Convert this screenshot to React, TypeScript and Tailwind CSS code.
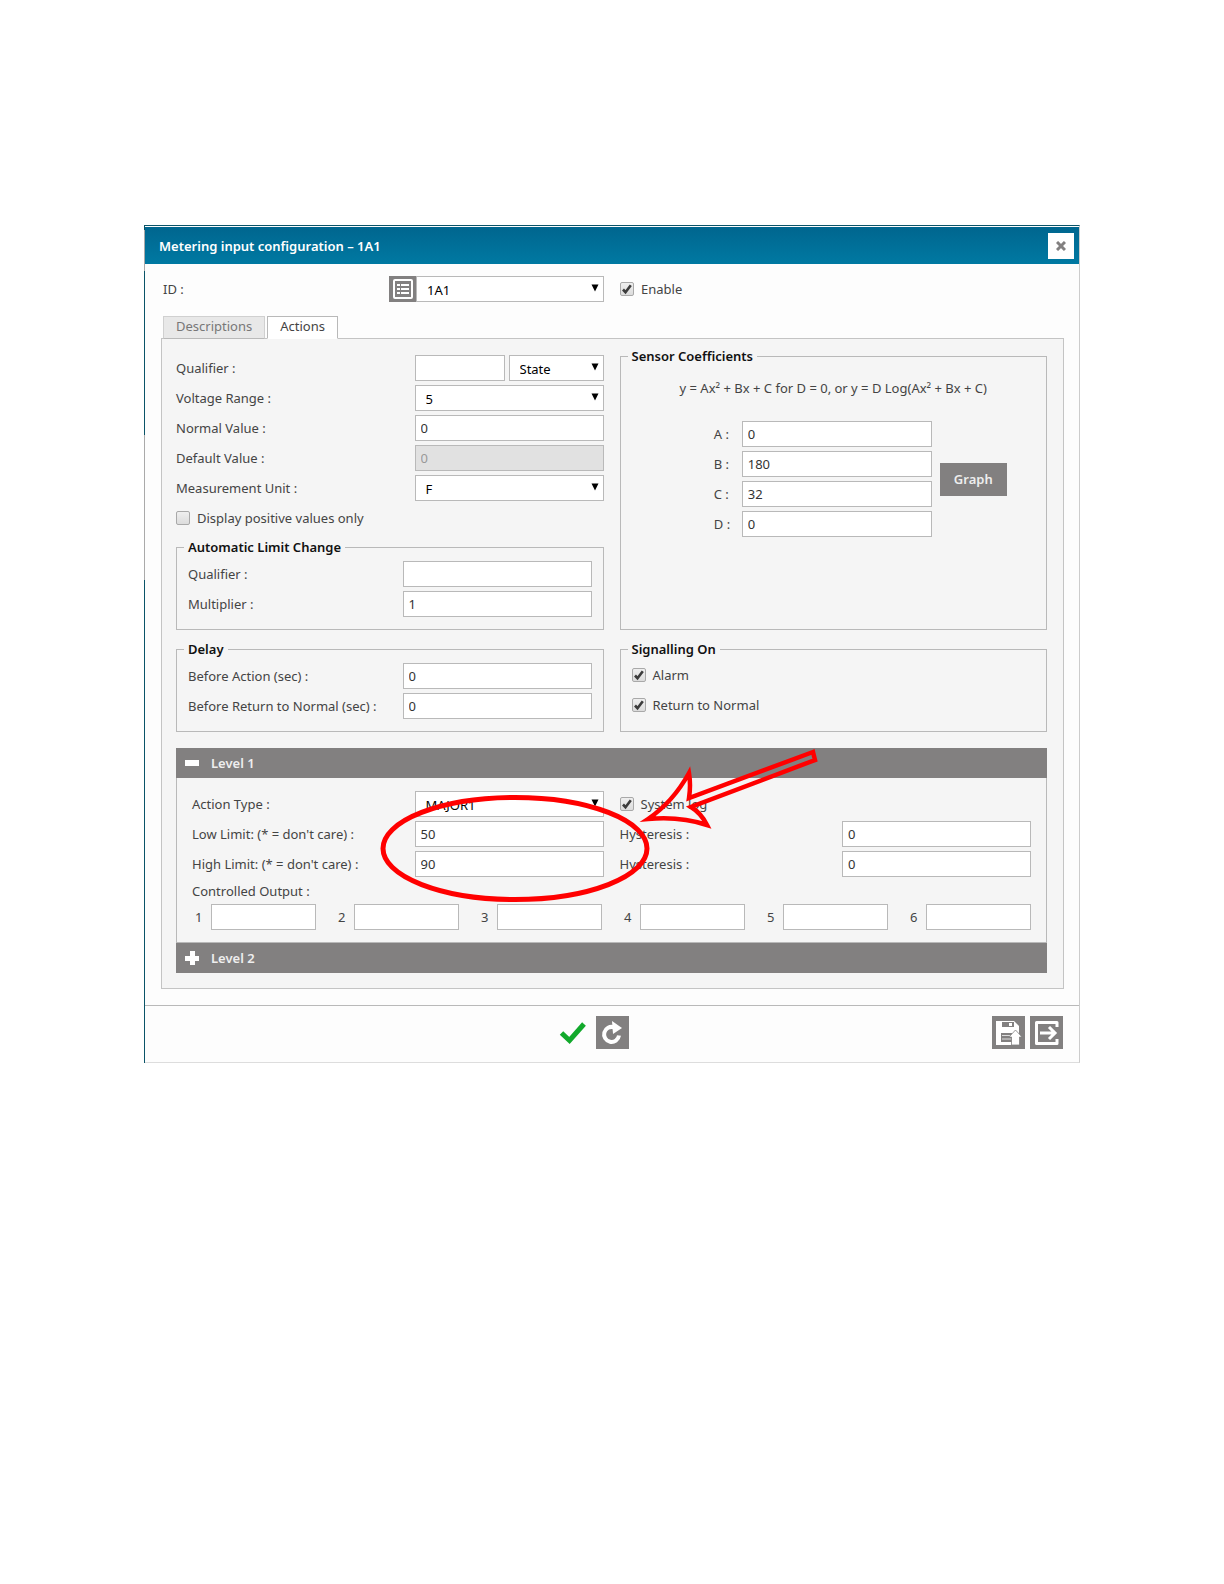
import { useId, useState, type ReactNode } from 'react';

const FIELD = 'h-[26px] border border-[#b9b9b9] bg-white px-[5px] text-[13px] text-[#333] outline-none focus:border-[#007099]';

function TextField({ label, value = '', width = 'w-[189px]', disabled = false }: { label: string; value?: string; width?: string; disabled?: boolean }) {
  const id = useId();
  return (
    <div className="flex items-center justify-between">
      <label htmlFor={id} className="pb-px">{label}</label>
      <input id={id} defaultValue={value} disabled={disabled} className={`${FIELD} ${width} disabled:bg-[#e1e1e1] disabled:text-[#999]`} />
    </div>
  );
}

function Select({ id, value, label, className = '' }: { id?: string; value: string; label?: string; className?: string }) {
  return (
    <div className={`relative ${className}`}>
      <select id={id} aria-label={label} defaultValue={value} className={`${FIELD} w-full appearance-none pt-px pl-[10px] text-black`}>
        <option>{value}</option>
      </select>
      <svg viewBox="0 0 8 8" className="pointer-events-none absolute top-[8px] right-[5px] size-[8px]"><path d="M0.5 0.5h7L4 7.5z" fill="#000" /></svg>
    </div>
  );
}

function SelectField({ label, value }: { label: string; value: string }) {
  const id = useId();
  return (
    <div className="flex items-center justify-between">
      <label htmlFor={id} className="pb-px">{label}</label>
      <Select id={id} value={value} className="w-[189px]" />
    </div>
  );
}

function Check({ label, checked = false }: { label: string; checked?: boolean }) {
  const [on, setOn] = useState(checked);
  return (
    <label className="flex h-[26px] items-center gap-[7px] pb-px">
      <span className="relative size-[14px]">
        <input type="checkbox" checked={on} onChange={(e) => setOn(e.target.checked)} className="block size-[14px] appearance-none rounded-[2px] border border-[#a9a9a9] bg-linear-to-b from-[#efefef] to-[#dcdcdc]" />
        {on && (
          <svg viewBox="0 0 14 14" className="pointer-events-none absolute inset-0 size-[14px]"><path d="M3 7.5L5.5 10.2L10.8 3.2" fill="none" stroke="#3c3c3c" strokeWidth="2.6" /></svg>
        )}
      </span>
      {label}
    </label>
  );
}

function Group({ title, children }: { title: string; children: ReactNode }) {
  return (
    <fieldset className="min-w-0 border border-[#b9b9b9] px-[11px] pb-[12px]">
      <legend className="-ml-1 px-1 text-[13px] leading-[18px] font-semibold text-[#111]">{title}</legend>
      {children}
    </fieldset>
  );
}

function LevelHeader({ title, open, onToggle }: { title: string; open: boolean; onToggle: () => void }) {
  return (
    <button onClick={onToggle} aria-expanded={open} className="flex h-[30px] w-full items-center gap-[12px] bg-[#828080] px-[9px] text-left font-semibold text-[#eee]">
      <svg viewBox="0 0 14 14" className="size-[14px]" fill="#fff">
        <path d={open ? 'M0 4h14v6H0z' : 'M5 0h5v5h4v5h-4v4H5v-4H0V5h5z'} />
      </svg>
      {title}
    </button>
  );
}

/** Hand-drawn markup that points at the two limit fields. */
function Annotation() {
  return (
    <svg viewBox="0 0 445 160" className="pointer-events-none absolute top-0 left-[202px] h-[160px] w-[445px]" fill="none" stroke="#f00" strokeWidth="5">
      <ellipse cx="137" cy="100.500" rx="132" ry="51" />
      <path d="M435 4L311 50Q313 37 311 25Q295 54 270 71Q302 68 329 77Q323 65 313 59L437 12Z" strokeWidth="4.500" strokeMiterlimit="8" />
    </svg>
  );
}

const COEFFS = [['A', '0'], ['B', '180'], ['C', '32'], ['D', '0']];
const ICON_BTN = 'flex size-[33px] items-center justify-center bg-[#828080] text-white';

export default function App() {
  const [tab, setTab] = useState('Actions');
  const [open1, setOpen1] = useState(true);
  const [open2, setOpen2] = useState(false);

  return (
    <main className="min-h-screen bg-white px-36 pt-[225px] pb-16 font-['Noto_Sans',sans-serif] text-[13px] leading-[18px] text-[#444]">
      <div className="bg-[linear-gradient(to_bottom,#0a5468_0_5px,#aaa_5px_46px,#0a5468_46px_210px,#aaa_210px_355px,#0a5468_355px)] pl-px">
        <section className="border-t border-r border-b border-t-[#0a5468] border-r-[#ccc] border-b-[#ddd] bg-[#fdfdfd] pt-px">
          <header className="flex h-[37px] items-center justify-between bg-linear-to-b from-[#00668f] to-[#0079a2] pr-[5px] pl-[14px]">
            <h1 className="text-[13px] font-semibold text-white">Metering input configuration – 1A1</h1>
            <button aria-label="Close" className="flex size-[26px] items-center justify-center bg-white">
              <svg viewBox="0 0 10 10" className="size-[10px]"><path d="M1 1L9 9M9 1L1 9" stroke="#828080" strokeWidth="3" /></svg>
            </button>
          </header>

          <div className="pt-[12px] pr-[15px] pl-4">
            <div className="grid grid-cols-2 gap-4 pr-[3px] pl-[2px]">
              <div className="flex items-center justify-between">
                <label htmlFor="input-id" className="pb-px">ID :</label>
                <div className="flex">
                  <button aria-label="List" className="flex h-[26px] w-[27px] items-center justify-center bg-[#828080]">
                    <svg viewBox="0 0 20 20" className="size-[20px]" fill="none" stroke="#fff" strokeWidth="2">
                      <rect x="1" y="1" width="18" height="18" rx="1" />
                      <path d="M4 6h3M8 6h8M4 10h3M8 10h8M4 14h3M8 14h8" />
                    </svg>
                  </button>
                  <Select id="input-id" value="1A1" className="w-[188px]" />
                </div>
              </div>
              <Check label="Enable" checked />
            </div>

            <div role="tablist" className="relative mt-[14px] -mb-px flex gap-[2px] pl-[2px]">
              {['Descriptions', 'Actions'].map((t) => (
                <button key={t} role="tab" aria-selected={tab === t} onClick={() => setTab(t)} className={`h-[23px] border px-[12px] pb-[3px] ${tab === t ? 'border-[#b9b9b9] border-b-white bg-white text-[#444]' : 'border-[#d0d0d0] border-b-[#b9b9b9] bg-[#e8e8e8] text-[#777]'}`}>
                  {t}
                </button>
              ))}
            </div>

            <div className="border border-[#c4c4c4] bg-[#f5f5f5] pt-2 pr-4 pb-[15px] pl-[14px]">
              <div className="grid grid-cols-2 gap-x-4 gap-y-[10px]">
                <div className="pt-2">
                  <div className="flex flex-col gap-1">
                    <div className="flex items-center justify-between">
                      <label htmlFor="qualifier" className="pb-px">Qualifier  :</label>
                      <div className="flex w-[189px] gap-1">
                        <input id="qualifier" className={`${FIELD} w-[90px]`} />
                        <Select label="Qualifier mode" value="State" className="flex-1" />
                      </div>
                    </div>
                    <SelectField label="Voltage Range :" value="5" />
                    <TextField label="Normal Value :" value="0" />
                    <TextField label="Default Value :" value="0" disabled />
                    <SelectField label="Measurement Unit :" value="F" />
                    <Check label="Display positive values only" />
                  </div>
                  <div className="pt-[7px]">
                    <Group title="Automatic Limit Change">
                      <div className="flex flex-col gap-1 pt-[5px]">
                        <TextField label="Qualifier :" />
                        <TextField label="Multiplier :" value="1" />
                      </div>
                    </Group>
                  </div>
                </div>

                <Group title="Sensor Coefficients">
                  <p className="pt-[14px] text-center">y = Ax² + Bx + C for D = 0, or y = D Log(Ax² + Bx + C)</p>
                  <div className="flex items-center justify-center gap-2 pt-[24px] pl-[54px]">
                    <div className="flex flex-col gap-1">
                      {COEFFS.map(([name, value]) => (
                        <div key={name} className="flex items-center">
                          <label htmlFor={`coef-${name}`} className="w-[28px] pb-px">{name} :</label>
                          <input id={`coef-${name}`} defaultValue={value} className={`${FIELD} w-[190px]`} />
                        </div>
                      ))}
                    </div>
                    <button className="h-[33px] w-[67px] bg-[#828080] font-semibold text-[#eee]">Graph</button>
                  </div>
                </Group>

                <Group title="Delay">
                  <div className="flex flex-col gap-1 pt-[5px]">
                    <TextField label="Before Action (sec) :" value="0" />
                    <TextField label="Before Return to Normal (sec) :" value="0" />
                  </div>
                </Group>

                <Group title="Signalling On">
                  <div className="flex flex-col gap-1 pt-[4px]">
                    <Check label="Alarm" checked />
                    <Check label="Return to Normal" checked />
                  </div>
                </Group>
              </div>

              <div className="relative mt-4">
                <LevelHeader title="Level 1" open={open1} onToggle={() => setOpen1(!open1)} />
                {open1 && (
                  <div className="border border-t-0 border-[#b9b9b9] px-[15px] pt-[13px] pb-[12px]">
                    <div className="grid grid-cols-2 gap-x-4 gap-y-1">
                      <SelectField label="Action Type :" value="MAJOR1" />
                      <Check label="System log" checked />
                      <TextField label="Low Limit: (* = don't care) :" value="50" />
                      <TextField label="Hysteresis :" value="0" />
                      <TextField label="High Limit: (* = don't care) :" value="90" />
                      <TextField label="Hysteresis :" value="0" />
                    </div>
                    <p className="pt-[5px]">Controlled Output :</p>
                    <div className="grid grid-cols-6 gap-x-[19px] pt-[4px]">
                      {[1, 2, 3, 4, 5, 6].map((n) => (
                        <div key={n} className="flex items-center gap-[9px]">
                          <label htmlFor={`out-${n}`} className="pl-[3px]">{n}</label>
                          <input id={`out-${n}`} className={`${FIELD} w-full min-w-0`} />
                        </div>
                      ))}
                    </div>
                  </div>
                )}
                <LevelHeader title="Level 2" open={open2} onToggle={() => setOpen2(!open2)} />
                <Annotation />
              </div>
            </div>
          </div>

          <footer className="mt-4 grid grid-cols-3 items-center border-t border-[#b9b9b9] px-4 pt-[10px] pb-[13px]">
            <div className="col-start-2 flex items-center justify-center gap-[9px] pr-9">
              <button aria-label="Apply">
                <svg viewBox="0 0 28 24" className="h-[24px] w-[28px]"><path d="M2.500 12L10.500 19.500L25 3" fill="none" stroke="#12a92c" strokeWidth="5" /></svg>
              </button>
              <button aria-label="Reload" className={ICON_BTN}>
                <svg viewBox="0 0 24 24" className="size-[24px]" fill="none">
                  <path d="M19 14.500A7.500 7.500 0 1 1 14 6.300" stroke="#fff" strokeWidth="4" />
                  <path d="M12 0L22 7L13 13z" fill="#fff" />
                </svg>
              </button>
            </div>
            <div className="flex justify-end gap-[5px]">
              <button aria-label="Save" className={ICON_BTN}>
                <svg viewBox="0 0 28 28" className="size-[28px]">
                  <path d="M2 2h18l5 5v19H2z" fill="#fff" />
                  <path d="M8 3h12v5H8z" fill="#828080" /><path d="M15 4h3v3h-3z" fill="#fff" />
                  <path d="M7 14h11v9H7z" fill="#828080" />
                  <path d="M8 16.500h10M8 20h9" stroke="#ddd" strokeWidth="1" />
                  <path d="M21.500 11l6.500 7h-2.500v8h-8v-8h-2.500z" fill="#fff" stroke="#828080" strokeWidth="0.800" />
                </svg>
              </button>
              <button aria-label="Exit" className={ICON_BTN}>
                <svg viewBox="0 0 28 28" className="size-[28px]" fill="none" stroke="#fff" strokeWidth="3">
                  <path d="M25 8V3.500H4.500V24.500H25V20" strokeLinejoin="round" />
                  <path d="M8 14H23M17 8L23 14L17 20" />
                </svg>
              </button>
            </div>
          </footer>
        </section>
      </div>
    </main>
  );
}
